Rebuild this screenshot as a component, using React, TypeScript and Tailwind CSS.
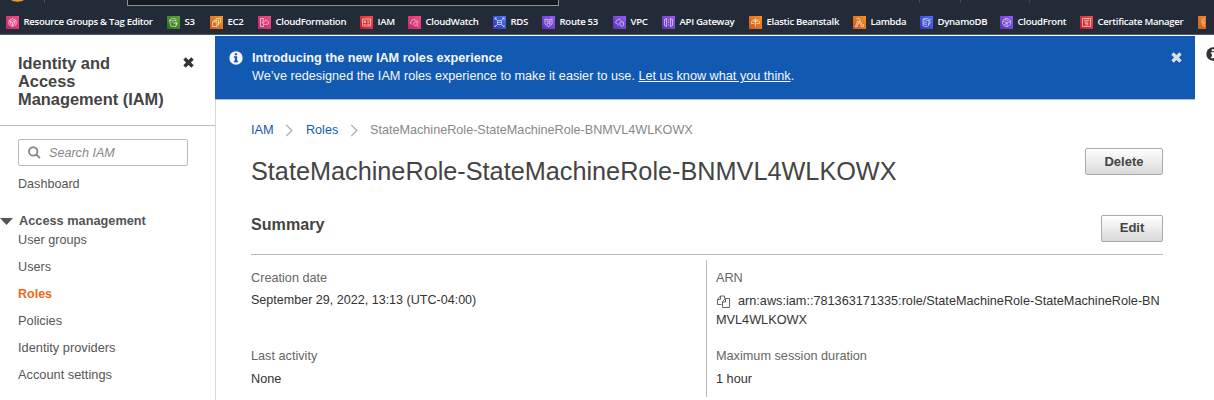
import React from "react";

type Glyph =
  | "groups" | "bucket" | "ec2" | "stack" | "card" | "cloud" | "db" | "route"
  | "vpc" | "gateway" | "bean" | "lambda" | "dynamo" | "globe" | "cert" | "misc";

const GLYPHS: Record<Glyph, string> = {
  groups: "M6.5 2.5l3.6 2v4l-3.6 2-3.6-2v-4zM6.5 4.5l2 1.1v2l-2 1.1-2-1.1v-2zM3 4.5l3.5 2 3.5-2M6.5 6.5v4",
  bucket: "M2.500 4L4 10.300h5L10 6M2.500 4c2.500-2 5-2 7 0-2 1.300-5 1.300-7 0M5.500 6.500l4.500 2M8 6l2.500 1.500",
  ec2: "M2.500 6h4.500v4.500H2.500zM4 6V4.500h4.500V9H7M6 4.500V2.500h4.500V7H8.500",
  stack: "M5.500 2.500h-3v8h3V8.500M5.500 2.500v1.500M3.800 5h2.500M3.800 6.700h1.500M5.500 8.300h4c1.600-.3 1.500-2.500 0-2.800C9 3.500 6.500 4 6.500 5.700 5 5.700 4.500 8 5.500 8.300",
  card: "M2.500 3h8v7h-8zM4 5h1.500v1.500H4zM3.800 8.500h2M7.300 5h2M7.300 6.700h2M7.300 8.500h2",
  cloud: "M4 8H3.300C1.800 7.800 2 5.700 3.500 5.600 3.800 3.300 6.800 2.800 7.700 4.600c1.500-.2 2.500.8 2.500 2M7.500 6a1.800 1.800 0 1 0 .1 0M8.800 9.300l1.700 1.500",
  db: "M2 2l2.500 2.500M11 2L8.500 4.500M2 11l2.500-2.500M11 11L8.500 8.500M4.500 4.500h4v4h-4zM4.500 6.500h4M2 2v1.800M2 2h1.800M11 2v1.800M11 2H9.200M2 11V9.200M11 11V9.200",
  route: "M3 3c2 1 5 1 7 0v4.500c0 1.500-3.500 3-3.500 3S3 9 3 7.500zM4.500 5h1.500v3H4.500M7 5h1.500L7.500 6.500l1 1.500H7",
  vpc: "M4 7.500C2 7.500 2 5.500 3.600 5.200 4 2.700 7.500 2.700 8 4.700M7 6.500l1.700-.8 1.800.8v2c0 1-1.800 2-1.800 2S7 9.500 7 8.500zM5 7.500v2",
  gateway: "M4.500 2.500L2.500 3.500v6l2 1zM8.500 2.500l2 1v6l-2 1zM6.500 3.500v1M6.500 6v1M6.500 8.500v1",
  bean: "M6.500 2.500v8M6.500 4C4 3.500 2 5 2.500 7.500h3M6.500 4C9 3.500 11 5 10.500 7.500h-3M4.500 5.500h4",
  lambda: "M3.500 2.500h2.500l3 6h1.500v2H8.500L6 5.500 4 10.500H2.500L5 4.500",
  dynamo: "M3 3.200c1.500-1 4-1 5.500 0s-1 2-5.500 0v6.500c1.500 1 4 1 5.500 0V7M3 5.500c1 .8 3 1 4 .6M3 7.500c1 .8 3 1 4 .6M10.500 3L8.500 6h2L8.500 9",
  globe: "M6.500 2.500a4 4 0 1 0 .1 0M3 5l4 2 3.500-2M7 7v3.500M4 9l3-2M5 3l3 2",
  cert: "M2.500 2.500h8v8h-8zM4 4.300h5M7.800 6H5.200v1.300h2.600V9H5.200",
  misc: "M6.500 3C4 3 3.500 5 4 6.500s1 3.500 3 3.500M6.500 5c-1.500 1-1 3 .5 3",
};

interface Service { name: string; glyph: Glyph; color: string; box: string }

const PINK = "from-[#bb2a66] to-[#f94a86]";
const ORANGE = "from-[#cc5a1e] to-[#f99220]";
const PURPLE = "from-[#5a31b4] to-[#965df5]";
const BLUE = "from-[#3334bb] to-[#4d74f5]";
const RED = "from-[#c41822] to-[#fb4c4c]";
const GREEN = "from-[#266f18] to-[#62a338]";

const services: Service[] = [
  { name: "Resource Groups & Tag Editor", glyph: "groups", color: PINK, box: "w-[161px]" },
  { name: "S3", glyph: "bucket", color: GREEN, box: "w-[43px]" },
  { name: "EC2", glyph: "ec2", color: ORANGE, box: "w-[48px]" },
  { name: "CloudFormation", glyph: "stack", color: PINK, box: "w-[102px]" },
  { name: "IAM", glyph: "card", color: RED, box: "w-[48px]" },
  { name: "CloudWatch", glyph: "cloud", color: PINK, box: "w-[85px]" },
  { name: "RDS", glyph: "db", color: BLUE, box: "w-[49px]" },
  { name: "Route 53", glyph: "route", color: PURPLE, box: "w-[71px]" },
  { name: "VPC", glyph: "vpc", color: PURPLE, box: "w-[49px]" },
  { name: "API Gateway", glyph: "gateway", color: PURPLE, box: "w-[87px]" },
  { name: "Elastic Beanstalk", glyph: "bean", color: ORANGE, box: "w-[104px]" },
  { name: "Lambda", glyph: "lambda", color: ORANGE, box: "w-[67px]" },
  { name: "DynamoDB", glyph: "dynamo", color: BLUE, box: "w-[80px]" },
  { name: "CloudFront", glyph: "globe", color: PURPLE, box: "w-[80px]" },
  { name: "Certificate Manager", glyph: "cert", color: RED, box: "w-[118px]" },
];

function ServiceIcon({ glyph, color }: { glyph: Glyph; color: string }) {
  return (
    <span className={`block h-[13px] w-[13px] shrink-0 bg-linear-to-tr ${color}`}>
      <svg viewBox="0 0 13 13" className="block h-[13px] w-[13px]" fill="none" stroke="#fff" strokeOpacity="0.65" strokeWidth="0.9">
        <path d={GLYPHS[glyph]} />
      </svg>
    </span>
  );
}

function TopBar() {
  return (
    <header className="h-[36px] border-b border-white bg-[#222b37]">
      <div className="flex h-[35px] flex-col overflow-hidden border-b border-[#545b64]">
        <div className="flex h-[6px] shrink-0 items-start">
          <svg className="ml-[10px] h-[3px] w-[16px] shrink-0" viewBox="0 0 16 3"><path d="M1 0h13C11 2.300 4 2.300 1 0z" fill="#f7981f" /></svg>
          <span className="ml-[18px] h-[3px] w-px shrink-0 bg-[#414d5c]" />
          <div className="ml-[82px] h-[6px] w-[432px] shrink-0 border-x border-b border-[#879596] bg-[#16191f]" />
          <span className="ml-[360px] h-[3px] w-px shrink-0 bg-[#414d5c]" />
          <span className="ml-[40px] h-[3px] w-px shrink-0 bg-[#414d5c]" />
          <span className="ml-[68px] h-[3px] w-px shrink-0 bg-[#414d5c]" />
        </div>
        <nav className="mt-[10px] flex h-[13px] items-center pl-[6px]">
          {services.map((s) => (
            <a key={s.name} className={`flex shrink-0 items-center gap-[4.500px] ${s.box}`}>
              <ServiceIcon glyph={s.glyph} color={s.color} />
              <span className="-mt-[2px] font-['Open_Sans',sans-serif] text-[9.600px] leading-[13px] font-semibold tracking-[-0.3px] whitespace-nowrap text-white">{s.name}</span>
            </a>
          ))}
          <span className="h-[13px] w-[8px] shrink-0 overflow-hidden"><ServiceIcon glyph="misc" color={ORANGE} /></span>
        </nav>
      </div>
    </header>
  );
}

function Cross({ className }: { className: string }) {
  return (
    <svg viewBox="0 0 11 11" className={className} fill="currentColor">
      <path d="M2.700.3L5.500 3.100 8.300.3 10.700 2.700 7.900 5.500l2.800 2.800-2.400 2.400-2.800-2.800-2.800 2.800L.3 8.300l2.800-2.800L.3 2.700z" />
    </svg>
  );
}

function InfoIcon({ mark, className }: { mark: string; className: string }) {
  return (
    <svg viewBox="0 0 14 14" className={className}>
      <circle cx="7" cy="7" r="6.700" fill="currentColor" />
      <path d="M5.800 2.300h2.300v1.900H5.800zM4.900 5.200h3.200v4.600h1v1.500H4.900V9.800h1V6.700h-1z" fill={mark} />
    </svg>
  );
}

function SideBar() {
  return (
    <aside className="h-[364px] w-[216px] shrink-0 overflow-hidden border-r border-[#d5dbdb] text-[12.900px] leading-[18px] text-[#555]">
      <div className="flex h-[90px] items-start justify-between border-b border-[#bbb] pt-[18px] pr-[21px] pl-[18px]">
        <h2 className="text-[16.400px] leading-[18px] font-bold text-[#444]">Identity and<br />Access<br />Management (IAM)</h2>
        <Cross className="mt-[3px] h-[11px] w-[11px] text-[#333]" />
      </div>
      <div className="mt-[13px] ml-[18px] flex h-[27px] w-[170px] items-center rounded-[2px] border border-[#bbb] pl-[9px]">
        <svg viewBox="0 0 13 13" className="h-[13px] w-[13px]" fill="none" stroke="#888" strokeWidth="1.900"><circle cx="5.200" cy="5.400" r="4.200" /><path d="M8.300 8.500l3.600 3.600" /></svg>
        <span className="ml-[8px] text-[12.600px] text-[#888] italic">Search IAM</span>
      </div>
      <a className="mt-[9px] ml-[18px] block text-[12.600px]">Dashboard</a>
      <div className="mt-[19px] flex items-center text-[12.750px] font-bold">
        <svg viewBox="0 0 13 7" className="h-[7px] w-[13px]"><path d="M0 0h13L6.500 7z" fill="#555" /></svg>
        <span className="ml-[6px]">Access management</span>
      </div>
      <nav className="mt-px ml-[18px] flex flex-col gap-[9px] text-[12.800px]">
        <a className="text-[12.650px]">User groups</a>
        <a className="text-[12.650px]">Users</a>
        <a className="text-[12.500px] font-bold text-[#eb6a20]">Roles</a>
        <a>Policies</a>
        <a>Identity providers</a>
        <a>Account settings</a>
      </nav>
    </aside>
  );
}

function Chevron() {
  return (
    <svg viewBox="0 0 8 14" className="h-[13px] w-[8px]" fill="none" stroke="#aaa" strokeWidth="1.300"><path d="M1 1l6 6-6 6" /></svg>
  );
}

function Button({ children, className }: { children: React.ReactNode; className: string }) {
  return (
    <button className={`h-[27px] shrink-0 rounded-[2px] border border-[#aaa] bg-linear-to-b from-white to-[#d9d9d9] text-[13px] font-bold text-[#444] ${className}`}>{children}</button>
  );
}

function CopyIcon() {
  return (
    <svg viewBox="0 0 13 13" className="mr-[8px] ml-px inline-block h-[13px] w-[13px] align-[-3px]" fill="none" stroke="#555" strokeWidth="0.9">
      <path d="M4.500 9.500h-4v-5l3-3.500h4v2.500M3.500 1v3.500h-3M5.500 12.500v-6l3-3h4v9zM8.500 3.500v3.500h-3" />
    </svg>
  );
}

function Content() {
  return (
    <main className="w-[979px] shrink-0">
      <div className="relative -ml-px flex h-[64px] w-[980px] items-start border-b border-[#a9bfdc] bg-[#125ab1] pt-[13px] pl-[14px] text-[#f5f7fa]">
        <InfoIcon mark="#125ab1" className="mt-[2px] h-[14px] w-[14px]" />
        <div className="ml-[9px] text-[12.680px] leading-[18px]">
          <p className="font-bold">Introducing the new IAM roles experience</p>
          <p>We’ve redesigned the IAM roles experience to make it easier to use. <a className="underline">Let us know what you think</a>.</p>
        </div>
        <Cross className="mt-[3px] mr-[13px] ml-auto h-[11px] w-[11px] text-[#dcdfe3]" />
      </div>
      <div className="ml-[35px] w-[912px]">
        <div className="mt-[20px] flex h-[20px] items-center text-[12.800px] text-[#888]">
          <a className="w-[34px] text-[#125ab1]">IAM</a>
          <Chevron />
          <a className="ml-[13px] w-[44px] text-[12.600px] text-[#125ab1]">Roles</a>
          <Chevron />
          <span className="ml-[12px] text-[12.640px]">StateMachineRole-StateMachineRole-BNMVL4WLKOWX</span>
        </div>
        <div className="mt-[8px] flex h-[45px] items-start justify-between">
          <h1 className="mt-[7px] text-[25.250px] leading-[32px] text-[#444]">StateMachineRole-StateMachineRole-BNMVL4WLKOWX</h1>
          <Button className="w-[78px]">Delete</Button>
        </div>
        <div className="mt-[21px] flex h-[41px] items-start justify-between border-b border-[#bbb]">
          <h2 className="-mt-px text-[16.100px] leading-[22px] font-bold text-[#444]">Summary</h2>
          <Button className="mt-px w-[62px] pb-[2px]">Edit</Button>
        </div>
        <div className="mt-[5px] flex text-[12.700px] leading-[19px] text-[#333]">
          <dl className="w-[455px] pt-[9px]">
            <dt className="text-[#666]">Creation date</dt>
            <dd className="mt-[3px] text-[12.560px]">September 29, 2022, 13:13 (UTC-04:00)</dd>
            <dt className="mt-[37px] text-[#666]">Last activity</dt>
            <dd className="mt-[4px]">None</dd>
          </dl>
          <dl className="h-[137px] w-[457px] border-l border-[#bbb] pt-[9px] pl-[9px]">
            <dt className="text-[#666]">ARN</dt>
            <dd className="mt-[4px] whitespace-nowrap"><CopyIcon />arn:aws:iam::781363171335:role/StateMachineRole-StateMachineRole-BN<br />MVL4WLKOWX</dd>
            <dt className="mt-[17px] text-[#666]">Maximum session duration</dt>
            <dd className="mt-[4px]">1 hour</dd>
          </dl>
        </div>
      </div>
    </main>
  );
}

export default function App() {
  return (
    <div className="h-[400px] w-[1214px] overflow-hidden bg-white font-['Liberation_Sans',Arial,sans-serif]">
      <TopBar />
      <div className="flex h-[364px]">
        <SideBar />
        <Content />
        <div className="ml-[11px] w-[8px] shrink-0 overflow-hidden pt-[11px]">
          <InfoIcon mark="#fff" className="h-[14px] w-[14px] text-[#333]" />
        </div>
      </div>
    </div>
  );
}
